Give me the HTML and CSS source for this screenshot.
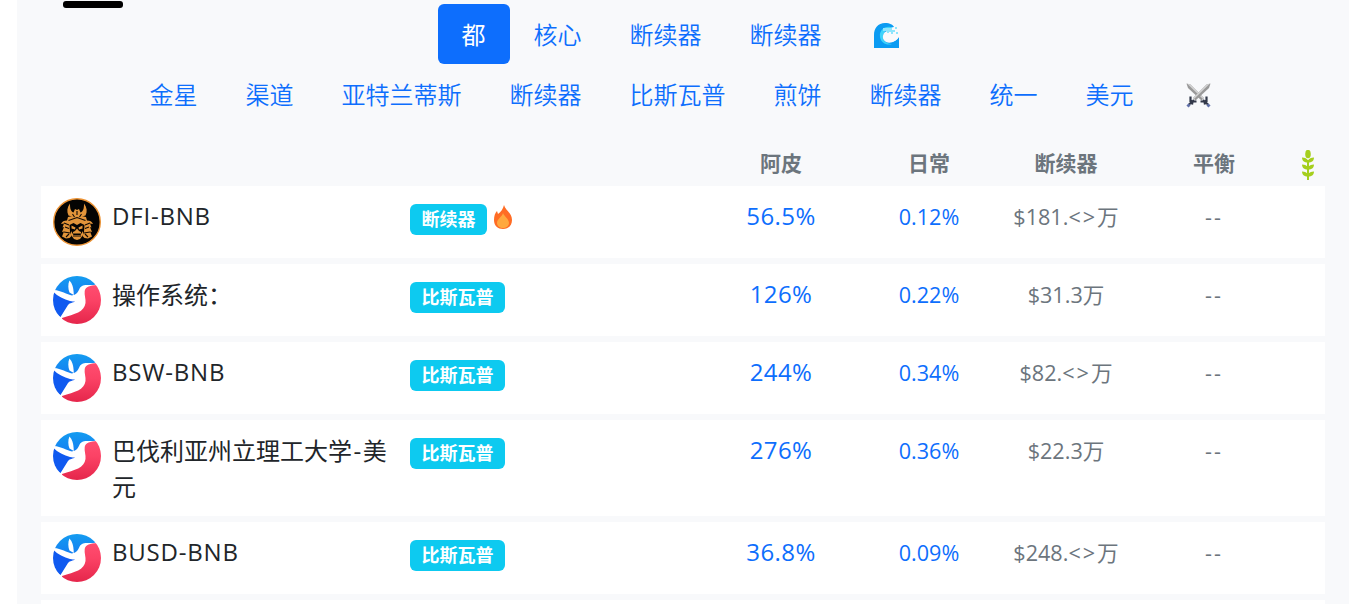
FILE: index.html
```
<!DOCTYPE html>
<html lang="zh-CN">
<head>
<meta charset="utf-8">
<title>Vaults</title>
<link rel="stylesheet" href="styles.css">
</head>
<body>
<svg class="defs" width="0" height="0" aria-hidden="true">
  <defs>
    <linearGradient id="sky" x1="0" y1="0" x2="0" y2="1"><stop offset="0" stop-color="#149cf0"/><stop offset="1" stop-color="#1580f2"/></linearGradient>
    <linearGradient id="rose" x1="0" y1="0" x2="0" y2="1"><stop offset="0" stop-color="#ff4d70"/><stop offset=".4" stop-color="#fb4265"/><stop offset="1" stop-color="#e5264b"/></linearGradient>
    <clipPath id="disc"><circle cx="24" cy="24" r="24"/></clipPath>
    <symbol id="bird" viewBox="0 0 48 48">
      <g clip-path="url(#disc)">
        <path fill="#fff" d="M0 0h48v48H0z"/>
        <path fill="url(#sky)" d="M1 14 5 0h34l4 8.500c-4 1.200-9 0-13 1-4 1.500-3.500 5-6 7.500-1.500 1.500-3.500 2-5 2.500C14 18.500 8 14.500 1 14Z"/>
        <path fill="#fff" d="M16.500 4.500c2.500 3 4 6 4.300 14.500l-4.300-2.500C15 13 14.800 8 16.500 4.500Z"/>
        <path fill="#105af0" d="M0 15.500c5 5 11 8 17 9.500 2 .5 4 .5 5 .5-2 1.500-5 1-7 3.500L7.500 41 0 36Z"/>
        <path fill="url(#rose)" d="M43.500 9c-6 .5-11 1.500-11.800 6-.6 4 1.300 8 .8 12-1.200 9-10.500 11-23.500 15v6h39V10Z"/>
      </g>
    </symbol>
  </defs>
</svg>
<main class="panel">
  <div class="indicator-row"><span class="indicator"></span></div>
  <nav class="tabs">
    <a class="tab active">都</a><a class="tab">核心</a><a class="tab">断续器</a><a class="tab">断续器</a>
    <a class="tab tab-icon"><svg width="25" height="25" viewBox="0 0 25 25"><path fill="#0b9bf2" d="M0 25V12C0 5 4 0 11 0c5 0 8 2 9 4-5 0-9 4-8 10 1 7 10 6 13 0v11Z"/><path fill="#3dd3fa" d="M19 4.500C11 2 5 7 6 14c1 6 7 9 12 7-6 0-10-4-9-8 1-5 5-8 10-8.500Z"/><path fill="#f8f9fb" d="M11 9c-3 3-3 8 1 10 5 2 10-1 12.500-5l.5-5-6-3Z"/><path fill="#8de5fc" d="M9 5h9v2h3v2h-2v2h-2V9h-2v1h-2V8H9Zm12-1h2v2h-2Zm1 5h2v2h-2Z"/></svg></a>
  </nav>
  <nav class="tabs">
    <a class="tab">金星</a><a class="tab">渠道</a><a class="tab">亚特兰蒂斯</a><a class="tab">断续器</a><a class="tab">比斯瓦普</a><a class="tab">煎饼</a><a class="tab">断续器</a><a class="tab">统一</a><a class="tab">美元</a>
    <a class="tab tab-icon"><svg width="25" height="25" viewBox="0 0 25 25"><g id="sword"><path fill="#999" d="m.5.500 4 1L18 15l-2.500 2.500L2 5Z"/><path fill="#d2d2d2" d="m1 .5 3.500 1L18 15l-1 1Z"/><path stroke="#33394a" stroke-width="2.200" fill="none" d="M20.500 13.500v4.500h-1.500M14.500 18.500h4l.5 3M17 17l5 4.500"/><path stroke="#6070a8" stroke-width="3" d="m21.500 21.500 2 2"/></g><use href="#sword" transform="matrix(-1 0 0 1 25 0)"/></svg></a>
  </nav>
  <section class="table">
    <div class="row head">
      <span></span><span></span><span>阿皮</span><span>日常</span><span>断续器</span><span>平衡</span>
      <span class="leaf"><svg width="14" height="31" viewBox="0 0 14 31"><g fill="#a5cf1d"><path d="M6 10h2v20H6Z"/><ellipse cx="7" cy="4" rx="2.800" ry="4.300"/><path id="leaves" d="M1 7.500c3 0 5 1 6 3 1-2 3-3 6-3 0 3-2 5-6 5s-6-2-6-5Z"/><use href="#leaves" y="7"/><use href="#leaves" y="14"/></g></svg></span>
    </div>
    <div class="row">
      <div class="asset"><svg class="logo" viewBox="0 0 48 48"><circle cx="24" cy="24" r="23.300" fill="#050403" stroke="#ed9436" stroke-width="1.400"/><g fill="#e2943a"><path d="M17 5.500c-3 4-3.500 8-1.500 12l5 1.500 3.500-1 3.500 1 5-1.500c2-4 1.500-8-1.500-12 0 5-.5 7.500-3.500 9L26 11l-2 1-2-1-1.500 3.500c-3-1.500-3.500-4-3.500-9Z"/><path d="M15 19c6-2 12-2 18 0l1 3.500c3 0 5 1 6 3.500l-3-.5 1.500 4-1.500-.5 2 5-2-.5 2 5-4 2-3.500-.5-2-2 1.500-4 .5-7-4-2-3.500 2-3.500-2-4 2 .5 7 1.500 4-2 2-3.500.5-4-2 2-5-2 .5 2-5-1.500.5 1.500-4-3 .5c1-2.500 3-3.500 6-3.500Z"/><path d="m18.500 27.500 4 2-.5 2-3.500-1Zm11 0-4 2 .5 2 3.500-1ZM22 33l2-2.500 2 2.500 2 1v1.500h-8V34Zm-4 0 2.500 4h7l2.500-4v4l-3 4-3 1-3-1-3-4Z"/></g><path stroke="#100a06" stroke-width="1.100" fill="none" d="m15.500 22.500 8.500-3 8.500 3M11 25l5 2m21-2-5 2M12 29l4 1.500m20-1.500-4 1.500M11 34l6 1m20-1-6 1M13 39l3-3m19 3-3-3M24 13v4m-4.500-1 2 3m7-3-2 3M20 38h8"/></svg><span class="name">DFI-BNB</span></div>
      <div class="tags"><span class="badge">断续器</span><svg class="fire" width="18" height="24" viewBox="0 0 18 24"><path fill="#ff6c24" d="M10 0c1 5 8 8 8 15 0 6-4 9-9 9s-9-3-9-9c0-4 1-7 3-9l1 3c3-2 5-5 6-9Z"/><path fill="#ffa83f" d="M9 8c1 3 6 6 6 10 0 3-3 5-6 5s-6-2-6-5c0-4 5-6 6-10Z"/></svg></div>
      <span class="apy">56.5%</span><span class="daily">0.12%</span><span class="tvl">$181.<i class="gap">&lt;&gt;</i>万</span><span class="balance">--</span>
    </div>
    <div class="row">
      <div class="asset"><svg class="logo"><use href="#bird"/></svg><span class="name han">操作系统：</span></div>
      <div class="tags"><span class="badge">比斯瓦普</span></div>
      <span class="apy">126%</span><span class="daily">0.22%</span><span class="tvl">$31.3万</span><span class="balance">--</span>
    </div>
    <div class="row">
      <div class="asset"><svg class="logo"><use href="#bird"/></svg><span class="name">BSW-BNB</span></div>
      <div class="tags"><span class="badge">比斯瓦普</span></div>
      <span class="apy">244%</span><span class="daily">0.34%</span><span class="tvl">$82.<i class="gap">&lt;&gt;</i>万</span><span class="balance">--</span>
    </div>
    <div class="row">
      <div class="asset"><svg class="logo"><use href="#bird"/></svg><span class="name han">巴伐利亚州立理工大学<i class="dash">-</i>美元</span></div>
      <div class="tags"><span class="badge">比斯瓦普</span></div>
      <span class="apy">276%</span><span class="daily">0.36%</span><span class="tvl">$22.3万</span><span class="balance">--</span>
    </div>
    <div class="row">
      <div class="asset"><svg class="logo"><use href="#bird"/></svg><span class="name">BUSD-BNB</span></div>
      <div class="tags"><span class="badge">比斯瓦普</span></div>
      <span class="apy">36.8%</span><span class="daily">0.09%</span><span class="tvl">$248.<i class="gap">&lt;&gt;</i>万</span><span class="balance">--</span>
    </div>
    <div class="row"></div>
  </section>
</main>
</body>
</html>
```
FILE: styles.css
```
* { box-sizing: border-box; }
body {
  margin: 0;
  height: 604px;
  overflow: hidden;
  background: #fff;
  color: #212529;
  font: 24px/36px "Open Sans", "Noto Sans CJK SC", sans-serif;
}
.defs { position: absolute; }
.panel {
  width: 1332px;
  height: 604px;
  margin-left: 17px;
  padding: 0 24px;
  overflow: hidden;
  background: #f8f9fb;
}
.indicator-row { height: 4px; padding: 1px 0 0 22px; }
.indicator {
  display: block;
  width: 60px;
  height: 7px;
  border-radius: 3px;
  background: #000;
}
.tabs { display: flex; justify-content: center; }
.tab {
  height: 60px;
  padding: 13px 24px 11px;
  color: #0d6efd;
  font-weight: 350;
  white-space: nowrap;
}
.tab.active { border-radius: 6px; background: #0d6efd; color: #fff; font-weight: 400; }
.tab-icon { width: 83px; padding: 19px 28px; line-height: 0; }
.table { display: flex; flex-direction: column; gap: 6px; padding-top: 18px; }
.row {
  display: grid;
  grid-template-columns: 357px 299px 168px 128px 146px 150px 36px;
  flex: none;
  min-height: 72px;
  background: #fff;
  text-align: center;
}
.row.head {
  min-height: 44px;
  height: 44px;
  margin-bottom: -6px;
  padding-top: 3px;
  background: none;
  color: #6c757d;
  font-size: 21px;
  font-weight: 700;
}
.leaf { padding: 5px 0 0 1px; line-height: 0; }
.asset { display: flex; gap: 11px; padding: 12px 0 12px 12px; text-align: left; }
.logo { flex: none; width: 48px; height: 48px; }
.name { width: 278px; letter-spacing: .8px; }
.name.han { padding-top: 1px; margin-bottom: -1px; letter-spacing: 0; }
.dash { padding: 0 1.500px; font-style: normal; }
.tags { display: flex; align-items: flex-start; gap: 7px; padding: 18px 12px; }
.fire { margin-top: 1px; }
.badge {
  height: 31px;
  padding: 0 11.500px;
  border-radius: 6px;
  background: #0dcaf0;
  color: #fff;
  font-size: 18px;
  font-weight: 700;
  line-height: 30px;
}
.apy { padding-top: 12px; color: #0d6efd; letter-spacing: .4px; }
.daily, .tvl, .balance { padding-top: 13px; font-size: 21.600px; }
.daily { color: #0d6efd; }
.tvl, .balance { color: #6c757d; }
.gap { font-style: normal; letter-spacing: 2px; }
.balance { letter-spacing: 2px; }
```
